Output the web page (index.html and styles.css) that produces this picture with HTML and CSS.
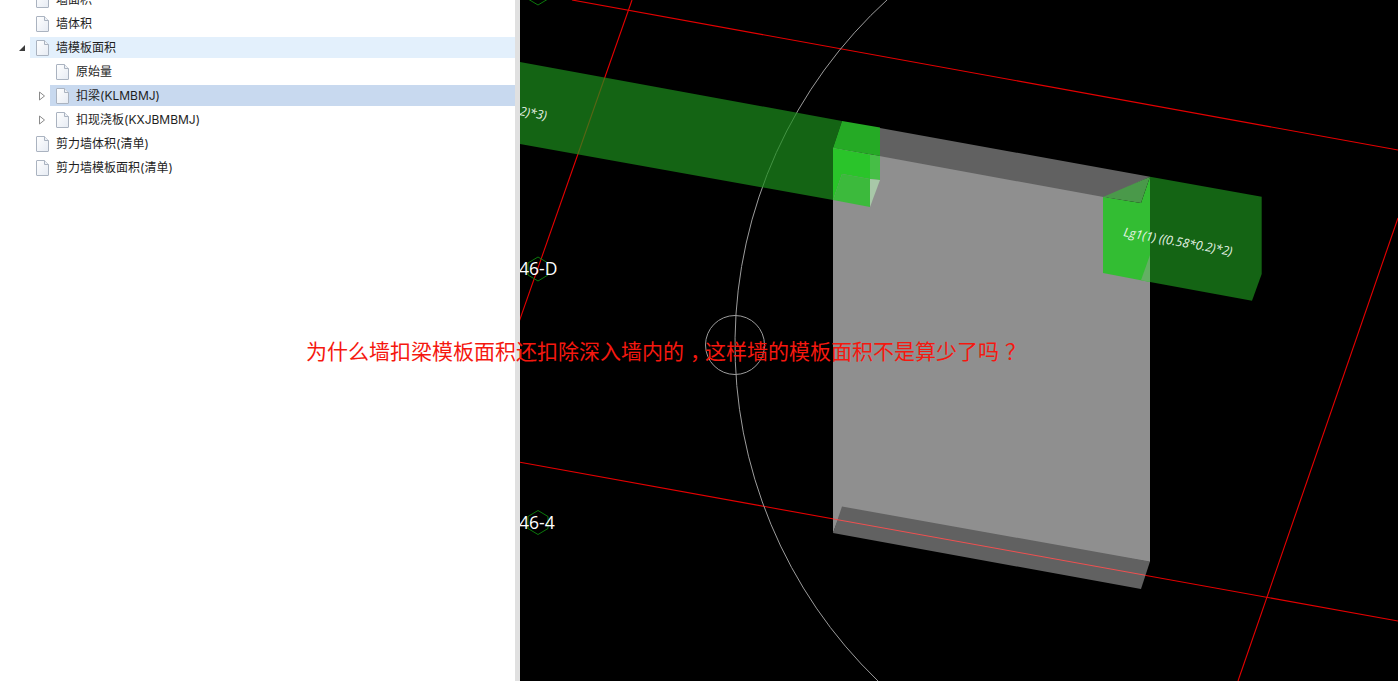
FILE: index.html
```html
<!DOCTYPE html>
<html lang="zh-CN">
<head>
<meta charset="utf-8">
<title>墙模板面积</title>
<link rel="stylesheet" href="styles.css">
</head>
<body>
<div class="app">
  <aside class="panel">
    <svg class="defs" width="0" height="0" aria-hidden="true">
      <defs>
        <linearGradient id="paper" x1="0" y1="0" x2="1" y2="1">
          <stop offset="0" stop-color="#ffffff"/>
          <stop offset="1" stop-color="#e6ebf3"/>
        </linearGradient>
        <symbol id="doc" viewBox="0 0 13 16">
          <path class="doc-shape" d="M.5 1Q.5.5 1 .5H8.5L12.500 4.500V15Q12.500 15.500 12 15.500H1Q.5 15.500 .5 15Z"/>
          <path class="doc-fold" d="M8.500.5V4.500H12.500"/>
        </symbol>
      </defs>
    </svg>
    <ul class="tree">
      <li class="row"><span class="twist"></span><span class="item"><svg class="doc"><use href="#doc"/></svg><span class="label">墙面积</span></span></li>
      <li class="row"><span class="twist"></span><span class="item"><svg class="doc"><use href="#doc"/></svg><span class="label">墙体积</span></span></li>
      <li class="row"><span class="twist"><svg class="arrow" viewBox="0 0 8 8"><path class="arrow-open" d="M7 1V7H1Z"/></svg></span><span class="item hover"><svg class="doc"><use href="#doc"/></svg><span class="label">墙模板面积</span></span></li>
      <li class="row child"><span class="twist"></span><span class="item"><svg class="doc"><use href="#doc"/></svg><span class="label">原始量</span></span></li>
      <li class="row child"><span class="twist"><svg class="arrow" viewBox="0 0 8 10"><path class="arrow-closed" d="M1.5 1L6.5 5L1.5 9Z"/></svg></span><span class="item selected"><svg class="doc"><use href="#doc"/></svg><span class="label">扣梁(KLMBMJ)</span></span></li>
      <li class="row child"><span class="twist"><svg class="arrow" viewBox="0 0 8 10"><path class="arrow-closed" d="M1.5 1L6.5 5L1.5 9Z"/></svg></span><span class="item"><svg class="doc"><use href="#doc"/></svg><span class="label">扣现浇板(KXJBMBMJ)</span></span></li>
      <li class="row"><span class="twist"></span><span class="item"><svg class="doc"><use href="#doc"/></svg><span class="label">剪力墙体积(清单)</span></span></li>
      <li class="row"><span class="twist"></span><span class="item"><svg class="doc"><use href="#doc"/></svg><span class="label">剪力墙模板面积(清单)</span></span></li>
    </ul>
  </aside>
  <div class="splitter"></div>
  <main class="canvas">
    <svg class="scene" viewBox="520 0 878 681" width="878" height="681">
      <g class="axis">
        <line x1="572" y1="0" x2="1398" y2="150"/>
        <line x1="632" y1="0" x2="519" y2="322"/>
        <line x1="520" y1="462.300" x2="1398" y2="621"/>
        <line x1="1398" y1="218" x2="1238" y2="681"/>
      </g>
      <g class="guide">
        <path d="M888 -1A467 467 0 0 0 878 681"/>
        <circle cx="735" cy="345" r="29.500"/>
      </g>
      <g class="hex">
        <polygon points="538,-19 548,-13 548,-1 538,5 528,-1 528,-13"/>
        <polygon points="538,257 548,263 548,275 538,281 528,275 528,263"/>
        <polygon points="538,510.500 548,516.500 548,528.500 538,534.500 528,528.500 528,516.500"/>
      </g>
      <polygon class="wall-side" points="880,128 1150,176.700 1103,199 880,158"/>
      <polygon class="wall-front" points="833,147.600 1150,205.600 1150,562 842,510 833,533"/>
      <polygon class="wall-side" points="842,506.500 1150,561.500 1141,589 833,533"/>
      <line class="axis-over" x1="833" y1="518.900" x2="1145" y2="575.200"/>
      <polygon class="beam" points="520,62 842,121 833,148 833,200 520,144"/>
      <polygon class="beam" points="1150,176.700 1261.700,196.700 1261.700,274 1252,300.700 1150,282"/>
      <polygon class="g-top" points="842,121 880,127.500 880,156 833,148"/>
      <polygon class="g-front" points="833,148 870,154.500 870,179 842,174 833,200"/>
      <polygon class="g-low" points="842,174 870,179 870,207 833,200"/>
      <polygon class="g-strip" points="870,154.500 880,156 880,180 870,179"/>
      <polygon class="g-tri" points="870,179 880,180 870,207"/>
      <polygon class="g-front2" points="1103,197 1141,203 1150,176.700 1150,282 1103,273"/>
      <polygon class="g-top2" points="1103,197 1150,176.700 1141,203"/>
      <polygon class="g-tri2" points="1141,280.300 1150,255 1150,282"/>
      <text class="grid-label" x="519" y="275">46-D</text>
      <text class="grid-label" x="519" y="529">46-4</text>
      <text class="beam-label" x="519" y="115" transform="rotate(10.300 519 115)">2)*3)</text>
      <text class="beam-label" x="1123" y="236" transform="rotate(10.300 1123 236)">Lg1(1) ((0.58*0.2)*2)</text>
    </svg>
  </main>
  <p class="caption">为什么墙扣梁模板面积还扣除深入墙内的<span class="punct">，</span>这样墙的模板面积不是算少了吗<span class="punct">？</span></p>
</div>
</body>
</html>
```

FILE: styles.css
```css
* { box-sizing: border-box; }
html, body { margin: 0; height: 100%; background: #fff; overflow: hidden; }
.app { position: relative; display: flex; width: 1398px; height: 681px; overflow: hidden; font-family: "Inter", "Noto Sans CJK SC", sans-serif; }
.panel { width: 515px; flex: none; background: #fff; overflow: hidden; }
.defs { position: absolute; }
.splitter { width: 5px; flex: none; background: #e0e0e0; }
.canvas { flex: 1; background: #000; overflow: hidden; }
.scene { display: block; }

.tree { list-style: none; margin: -11px 0 0; padding: 0; font-size: 12px; color: #1e1e1e; }
.row { display: flex; align-items: center; height: 21px; margin-bottom: 3px; padding-left: 18px; }
.row.child { padding-left: 38px; }
.twist { width: 12px; flex: none; display: flex; align-items: center; }
.item { flex: 1; height: 21px; display: flex; align-items: center; gap: 7px; padding-left: 6px; white-space: nowrap; }
.item.hover { background: #e3f0fc; }
.item.selected { background: #c8d9ef; }
.label { margin-bottom: 2px; }
.doc { width: 13px; height: 16px; flex: none; }
.doc-shape { fill: url(#paper); stroke: #aab3c0; }
.doc-fold { fill: #eef1f6; stroke: #aab3c0; }
.selected .doc-shape { fill: #c6dff8; stroke: #8fb0d6; }
.arrow { width: 8px; height: 10px; display: block; }
.arrow-open { fill: #3c3c3c; }
.arrow-closed { fill: #fff; stroke: #8a8a8a; }

.axis line { stroke: #e60000; stroke-width: 1.1; }
.axis-over { stroke: #f05050; stroke-width: 1; }
.guide path, .guide circle { fill: none; stroke: #9c9c9c; stroke-width: 1; }
.hex polygon { fill: none; stroke: #0b780b; stroke-width: 1; }
.wall-front { fill: #8f8f8f; }
.wall-side { fill: #616161; }
.beam { fill: rgb(29, 143, 29); fill-opacity: .7; }
.g-top { fill: #25aa25; }
.g-front { fill: #2ac42a; }
.g-low { fill: #3cba3c; }
.g-strip { fill: #46be46; }
.g-tri { fill: #a8c8a8; }
.g-top2 { fill: #4a994a; }
.g-front2 { fill: #33bd33; }
.g-tri2 { fill: #63b063; }
.grid-label { font-family: "Open Sans", sans-serif; font-size: 17.500px; fill: #fff; }
.beam-label { font-family: "Open Sans", sans-serif; font-size: 12.300px; font-style: italic; fill: #e8f4e8; }

.caption { position: absolute; left: 306px; top: 335px; margin: 0; font-family: "Noto Sans CJK SC", sans-serif; font-size: 21px; font-weight: 400; line-height: 30px; color: #f5180f; white-space: nowrap; }
.punct { display: inline-block; transform: translateX(6px); }
```
